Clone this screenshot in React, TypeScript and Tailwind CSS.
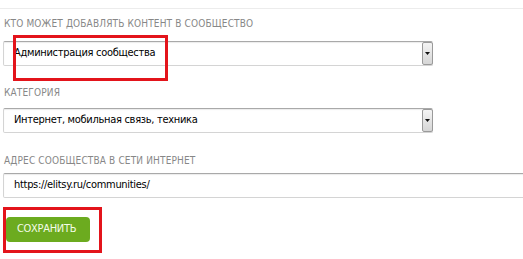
const Field = ({ text, arrow = true, wide = false }: { text: string; arrow?: boolean; wide?: boolean }) => (
  <div
    className={`relative h-[25px] ${wide ? "w-[540px]" : "w-[430px]"} flex items-center border border-[#d4d4d4] border-t-[#a9a9a9] rounded-[2px] bg-white shadow-[inset_0_1px_1px_rgba(0,0,0,0.08)]`}
  >
    <span className="pl-[10px] text-[11px] tracking-[-0.3px] text-black">{text}</span>
    {arrow && (
      <div className="absolute right-[-1px] top-[0px] h-[23px] w-[11px] border border-[#9a9a9a] rounded-[2px] bg-gradient-to-b from-[#f4f4f4] to-[#d6d6d6] flex items-center justify-center">
        <svg width="5" height="3" viewBox="0 0 5 3">
          <path d="M0 0h5L2.5 3z" fill="#111" />
        </svg>
      </div>
    )}
  </div>
)

const Label = ({ children }: { children: string }) => (
  <div className="pl-[1px] text-[10px] leading-[12px] tracking-[0.15px] uppercase text-[#878787]">{children}</div>
)

export default function App() {
  return (
    <div className="relative w-[523px] h-[259px] bg-white overflow-hidden" style={{ fontFamily: '"DejaVu Sans Condensed", "DejaVu Sans", sans-serif' }}>
      <div className="mt-[8px] border-t border-[#ececec]" />
      <div className="pl-[3px] pt-[9px] flex flex-col">
        <Label>Кто может добавлять контент в сообщество</Label>
        <div className="mt-[11px]">
          <Field text="Администрация сообщества" />
        </div>
        <div className="mt-[21px]">
          <Label>Категория</Label>
        </div>
        <div className="mt-[9px]">
          <Field text="Интернет, мобильная связь, техника" />
        </div>
        <div className="mt-[22px]">
          <Label>Адрес сообщества в сети интернет</Label>
        </div>
        <div className="mt-[6px]">
          <Field text="https://elitsy.ru/communities/" arrow={false} wide />
        </div>
        <button className="mt-[19px] ml-[3px] w-[84px] h-[25px] rounded-[4px] bg-[#6cab1f] text-[#f4fbe9] text-[11px] tracking-[-0.3px] text-left pl-[11px]">
          СОХРАНИТЬ
        </button>
      </div>
      <div className="absolute left-[13px] top-[35px] w-[155px] h-[46px] border-[3px] border-[#e3141b]" />
      <div className="absolute left-[3px] top-[207px] w-[99px] h-[46px] border-[3px] border-[#e3141b]" />
    </div>
  )
}
